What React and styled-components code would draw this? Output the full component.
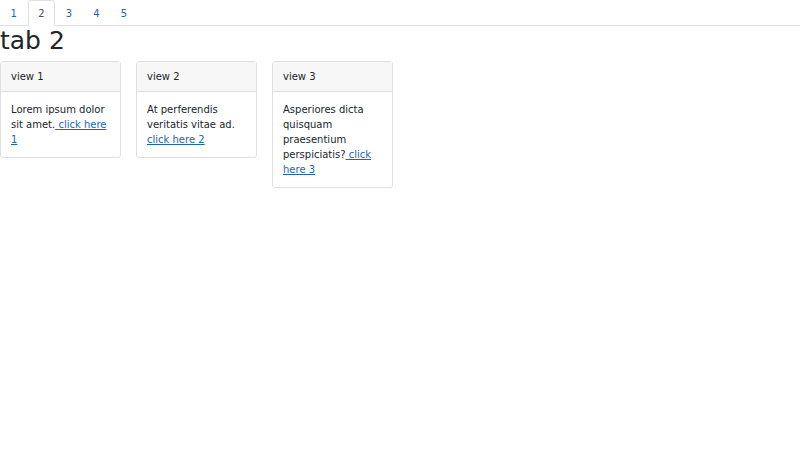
import React, { useState } from 'react';
import styled, { createGlobalStyle } from 'styled-components';

const GlobalStyle = createGlobalStyle`
  html, body {
    margin: 0;
    padding: 0;
    background: #fff;
  }
  body {
    font-family: "DejaVu Sans", sans-serif;
    font-size: 10px;
    line-height: 15px;
    color: #212529;
  }
`;

const TabBar = styled.ul`
  display: flex;
  margin: 0;
  padding: 0;
  list-style: none;
  border-bottom: 1px solid #dee2e6;
`;

const TabItem = styled.li`
  margin-bottom: -1px;
`;

const TabLink = styled.a`
  display: block;
  padding: 4.5px 9.6px;
  font-size: 10px;
  line-height: 15px;
  text-decoration: none;
  cursor: pointer;
  border: 1px solid transparent;
  border-top-left-radius: 3px;
  border-top-right-radius: 3px;
  color: ${(p) => (p.$active ? '#495057' : '#1a66b3')};
  background: ${(p) => (p.$active ? '#fff' : 'transparent')};
  border-color: ${(p) =>
    p.$active ? '#dee2e6 #dee2e6 #fff' : 'transparent'};
`;

const Title = styled.h1`
  margin: 0 0 5px;
  font-size: 25px;
  line-height: 30px;
  font-weight: 500;
  color: #212529;
`;

const CardRow = styled.div`
  display: flex;
  align-items: flex-start;
  gap: 15px;
`;

const Card = styled.div`
  width: 121px;
  box-sizing: border-box;
  border: 1px solid #dfdfdf;
  border-radius: 3px;
  background: #fff;
`;

const CardHeader = styled.div`
  padding: 7px 10px;
  background: #f7f7f7;
  border-bottom: 1px solid #dfdfdf;
`;

const CardBody = styled.div`
  padding: 10px;
`;

const CardLink = styled.a`
  color: #1a66b3;
  text-decoration: underline;
  cursor: pointer;
`;

const views = [
  { title: 'view 1', text: 'Lorem ipsum dolor sit amet.', link: 'click here 1' },
  { title: 'view 2', text: 'At perferendis veritatis vitae ad.', link: 'click here 2' },
  { title: 'view 3', text: 'Asperiores dicta quisquam praesentium perspiciatis?', link: 'click here 3' },
];

export default function App() {
  const [tab, setTab] = useState(2);

  return (
    <>
      <GlobalStyle />
      <TabBar>
        {[1, 2, 3, 4, 5].map((n) => (
          <TabItem key={n}>
            <TabLink $active={n === tab} onClick={() => setTab(n)}>
              {n}
            </TabLink>
          </TabItem>
        ))}
      </TabBar>
      <Title>tab {tab}</Title>
      <CardRow>
        {views.map((v) => (
          <Card key={v.title}>
            <CardHeader>{v.title}</CardHeader>
            <CardBody>
              {v.text}
              <CardLink> {v.link}</CardLink>
            </CardBody>
          </Card>
        ))}
      </CardRow>
    </>
  );
}
